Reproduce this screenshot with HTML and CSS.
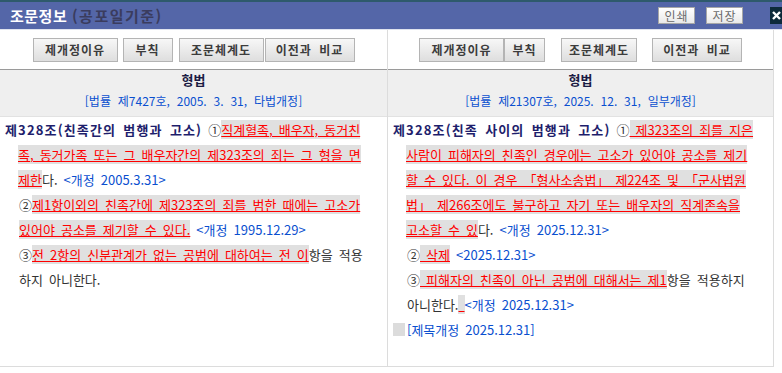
FILE: index.html
```html
<!DOCTYPE html>
<html lang="ko">
<head>
<meta charset="utf-8">
<title>조문정보</title>
<link rel="stylesheet" href="styles.css">
</head>
<body>
<div class="win">
  <div class="topstrip"></div>
  <div class="titlebar">
    <h1 class="title">조문정보 <span class="sub">(공포일기준)</span></h1>
    <div class="tools">
      <button class="tbtn">인쇄</button>
      <button class="tbtn">저장</button>
    </div>
    <div class="close"><svg width="11" height="11" viewBox="0 0 11 11"><path d="M2 2 L9 9 M9 2 L2 9" stroke="#fff" stroke-width="2.4"/></svg></div>
  </div>
  <div class="cols">
    <section class="pane pane-left">
      <div class="btns">
        <button class="btn w85">제개정이유</button>
        <button class="btn w50 ml5">부칙</button>
        <button class="btn w85 ml6">조문체계도</button>
        <button class="btn w90 ml1">이전과 비교</button>
      </div>
      <div class="head">
        <div class="law">형법</div>
        <div class="ref">[법률 제7427호, 2005. 3. 31, 타법개정]</div>
      </div>
      <div class="body">
        <p class="lead"><b class="art">제328조(친족간의 범행과 고소)</b> ①<span class="chg">직계혈족, 배우자, 동거친<br>족, 동거가족 또는 그 배우자간의 제323조의 죄는 그 형을 면<br>제한</span>다. <span class="rev">&lt;개정 2005.3.31&gt;</span></p>
        <p class="para">②<span class="chg">제1항이외의 친족간에 제323조의 죄를 범한 때에는 고소가<br>있어야 공소를 제기할 수 있다.</span> <span class="rev">&lt;개정 1995.12.29&gt;</span></p>
        <p class="para">③<span class="chg">전 2항의 신분관계가 없는 공범에 대하여는 전 이</span>항을 적용<br>하지 아니한다.</p>
      </div>
    </section>
    <section class="pane pane-right">
      <div class="btns">
        <button class="btn w85">제개정이유</button>
        <button class="btn w41">부칙</button>
        <button class="btn w76 ml16">조문체계도</button>
        <button class="btn w90 ml15">이전과 비교</button>
      </div>
      <div class="head">
        <div class="law">형법</div>
        <div class="ref">[법률 제21307호, 2025. 12. 31, 일부개정]</div>
      </div>
      <div class="body">
        <p class="lead"><b class="art">제328조(친족 사이의 범행과 고소)</b> ①<span class="chg"> 제323조의 죄를 지은<br>사람이 피해자의 친족인 경우에는 고소가 있어야 공소를 제기<br>할 수 있다. 이 경우 「형사소송법」 제224조 및 「군사법원<br>법」 제266조에도 불구하고 자기 또는 배우자의 직계존속을<br>고소할 수 있</span>다. <span class="rev">&lt;개정 2025.12.31&gt;</span></p>
        <p class="para">②<span class="chg"> 삭제</span> <span class="rev">&lt;2025.12.31&gt;</span></p>
        <p class="para">③<span class="chg"> 피해자의 친족이 아닌 공범에 대해서는 제1</span>항을 적용하지<br>아니한다.<span class="chg">&nbsp;</span><span class="rev">&lt;개정 2025.12.31&gt;</span></p>
        <p class="note"><span class="box"></span><span class="rev">[제목개정 2025.12.31]</span></p>
      </div>
    </section>
  </div>
</div>
</body>
</html>
```

FILE: styles.css
```css
* { box-sizing: border-box; }
html, body { margin: 0; padding: 0; background: #fff; }
body {
  width: 782px;
  height: 373px;
  overflow: hidden;
  font-family: "Noto Sans CJK KR", "Noto Sans", sans-serif;
  font-size: 13px;
  color: #333;
}
.win { width: 782px; }
.topstrip { height: 2px; background: #2e5a6c; }
.titlebar {
  height: 28px;
  background: #5466a8;
  border-bottom: 1px solid #dfe3ee;
  display: flex;
  align-items: center;
  padding-left: 10px;
}
.title {
  margin: 0;
  font-size: 15px;
  font-weight: bold;
  color: #fff;
  flex: 1;
  letter-spacing: 0.5px;
  line-height: 27px;
}
.title .sub { color: #3a3c5e; font-weight: bold; letter-spacing: 1.5px; }
.tools { display: flex; gap: 11px; margin-right: 27px; }
.tbtn {
  height: 17px;
  width: 37px;
  padding: 0;
  border: 1px solid #a7a7a7;
  background: linear-gradient(#ffffff, #e9e9e9);
  font-family: inherit;
  font-size: 12px;
  line-height: 15px;
  letter-spacing: 1px;
  color: #6a6a6a;
}
.close {
  width: 12px;
  height: 17px;
  background: #0d2a3a;
  display: flex;
  align-items: center;
  justify-content: flex-end;
}
.cols { display: flex; }
.pane {
  height: 337px;
  border-right: 1px solid #dcdcdc;
  border-bottom: 1px solid #dcdcdc;
  display: flex;
  flex-direction: column;
}
.pane-left { width: 388px; }
.pane-right { width: 386px; }
.btns {
  height: 40px;
  display: flex;
  justify-content: center;
  align-items: flex-start;
  padding-top: 8px;
  border-bottom: 1px solid #9a9a9a;
}
.btn {
  height: 24px;
  padding: 0;
  border: 1px solid #b4b4b4;
  background: linear-gradient(#f7f7f7, #dedede);
  font-family: inherit;
  font-size: 12px;
  font-weight: bold;
  color: #3c3c3c;
  letter-spacing: 1px;
  word-spacing: 3px;
  line-height: 22px;
}
.w85 { width: 85px; }
.w50 { width: 50px; }
.w41 { width: 41px; }
.w76 { width: 76px; }
.w90 { width: 90px; }
.ml1 { margin-left: 1px; }
.ml5 { margin-left: 5px; }
.ml6 { margin-left: 6px; }
.ml15 { margin-left: 15px; }
.ml16 { margin-left: 16px; }
.head {
  height: 47px;
  background: #efefef;
  border-bottom: 1px solid #e2e2e2;
  text-align: center;
  padding-top: 1px;
}
.law {
  font-weight: bold;
  color: #1c1c44;
  line-height: 18px;
  font-size: 13px;
}
.ref {
  color: #0a4fcf;
  font-size: 12px;
  line-height: 24px;
  word-spacing: 3.5px;
}
.body {
  padding: 0 4px 0 5px;
  line-height: 25px;
  flex: 1;
  word-spacing: 2.4px;
}
.body p { margin: 0; }
.lead { padding-left: 13px; text-indent: -13px; }
.para { padding-left: 14px; }
.art { color: #1e1e6c; letter-spacing: 1.15px; }
.chg {
  color: #ff0000;
  background: #e0e0e0;
  text-decoration: underline;
  text-decoration-thickness: 1px;
}
.rev { color: #0a4fcf; }
.note { display: flex; align-items: center; }
.box {
  display: inline-block;
  width: 12px;
  height: 13px;
  background: #dcdcdc;
  margin-right: 2px;
}
```
